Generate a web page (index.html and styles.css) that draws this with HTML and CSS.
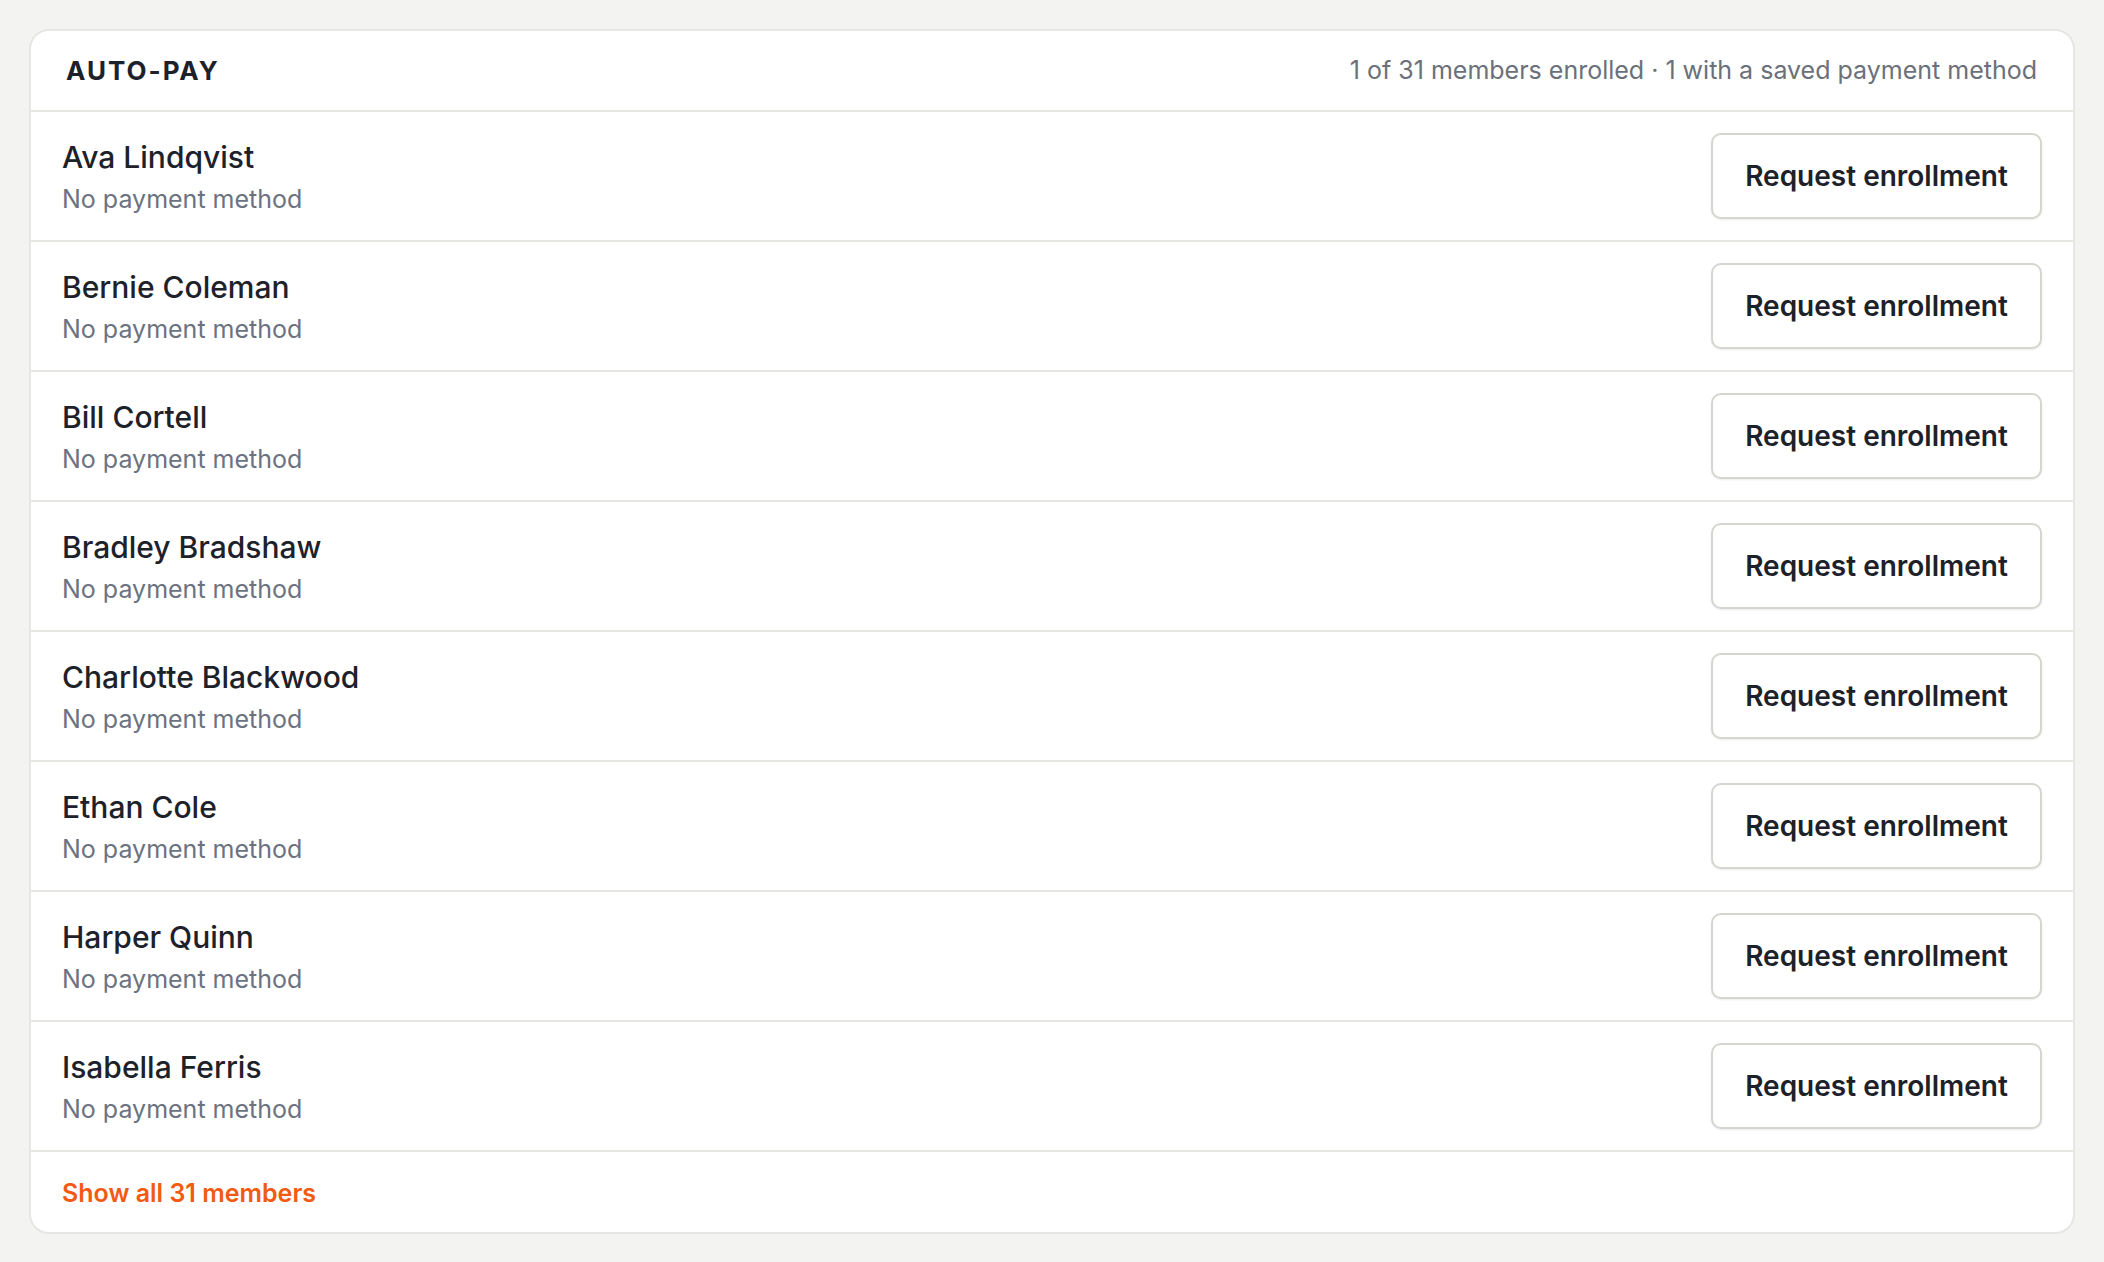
FILE: index.html
```html
<!DOCTYPE html>
<html lang="en">
<head>
    <meta charset="UTF-8">
    <title>Auto-pay</title>
    <link rel="stylesheet" href="styles.css">
</head>
<body>
    <div class="card">
        <div class="card-header">
            <h2>AUTO-PAY</h2>
            <span class="summary">1 of 31 members enrolled · 1 with a saved payment method</span>
        </div>

        <div class="member">
            <div class="member-info">
                <div class="name">Ava Lindqvist</div>
                <div class="method">No payment method</div>
            </div>
            <button class="btn">Request enrollment</button>
        </div>
        <div class="member">
            <div class="member-info">
                <div class="name">Bernie Coleman</div>
                <div class="method">No payment method</div>
            </div>
            <button class="btn">Request enrollment</button>
        </div>
        <div class="member">
            <div class="member-info">
                <div class="name">Bill Cortell</div>
                <div class="method">No payment method</div>
            </div>
            <button class="btn">Request enrollment</button>
        </div>
        <div class="member">
            <div class="member-info">
                <div class="name">Bradley Bradshaw</div>
                <div class="method">No payment method</div>
            </div>
            <button class="btn">Request enrollment</button>
        </div>
        <div class="member">
            <div class="member-info">
                <div class="name">Charlotte Blackwood</div>
                <div class="method">No payment method</div>
            </div>
            <button class="btn">Request enrollment</button>
        </div>
        <div class="member">
            <div class="member-info">
                <div class="name">Ethan Cole</div>
                <div class="method">No payment method</div>
            </div>
            <button class="btn">Request enrollment</button>
        </div>
        <div class="member">
            <div class="member-info">
                <div class="name">Harper Quinn</div>
                <div class="method">No payment method</div>
            </div>
            <button class="btn">Request enrollment</button>
        </div>
        <div class="member">
            <div class="member-info">
                <div class="name">Isabella Ferris</div>
                <div class="method">No payment method</div>
            </div>
            <button class="btn">Request enrollment</button>
        </div>

        <div class="card-footer">
            <a href="#" class="show-all">Show all 31 members</a>
        </div>
    </div>
</body>
</html>
```

FILE: styles.css
```css
body {
    font-family: Inter, "Noto Sans", sans-serif;
    margin: 0;
    padding: 29px 29px;
    background: #f3f3f1;
    color: #1d2129;
}
.card {
    background: #fff;
    border: 2px solid #e6e6e2;
    border-radius: 20px;
}
.card-header {
    display: flex;
    align-items: center;
    justify-content: space-between;
    height: 79px;
    padding: 0 36px 0 35px;
    border-bottom: 2px solid #e6e6e2;
}
.card-header h2 {
    margin: 0;
    font-size: 26px;
    font-weight: 700;
    letter-spacing: 2px;
}
.summary {
    font-size: 25px;
    color: #6b7079;
    margin-bottom: 2px;
}
.member {
    display: flex;
    align-items: center;
    justify-content: space-between;
    height: 128px;
    padding: 0 31px 0 31px;
    border-bottom: 2px solid #e6e6e2;
}
.member-info {
    padding-top: 1px;
}
.name {
    font-size: 30px;
    line-height: 38px;
    font-weight: 500;
}
.method {
    font-size: 25px;
    line-height: 34px;
    margin-top: 6px;
    color: #6b7280;
}
.btn {
    font-family: inherit;
    font-size: 28px;
    font-weight: 600;
    color: #1d2129;
    background: #fff;
    width: 331px;
    height: 86px;
    border: 2px solid #d6d6d0;
    border-radius: 10px;
    box-shadow: 0 1px 2px rgba(0,0,0,0.08);
    cursor: pointer;
}
.card-footer {
    height: 78px;
    display: flex;
    align-items: center;
    padding: 2px 31px 0;
}
.show-all {
    font-size: 25px;
    font-weight: 600;
    color: #f25a12;
    text-decoration: none;
}
```
